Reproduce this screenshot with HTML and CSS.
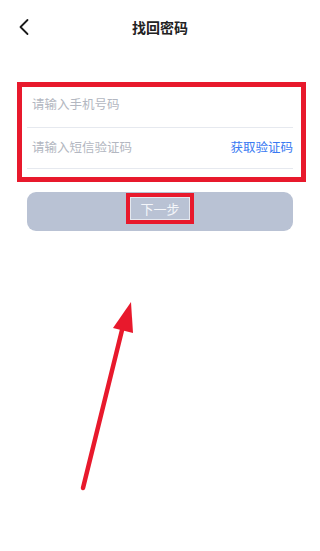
FILE: index.html
```html
<!DOCTYPE html>
<html lang="zh-CN">
<head>
<meta charset="utf-8">
<link rel="stylesheet" href="styles.css">
</head>
<body>
<div class="page">
  <header class="nav">
    <span class="back">
      <svg width="14" height="18" viewBox="0 0 14 18"><path d="M9.5 2 L2.5 9 L9.5 16" fill="none" stroke="#1a1a1a" stroke-width="1.8" stroke-linecap="round" stroke-linejoin="round"/></svg>
    </span>
    <h1 class="title">找回密码</h1>
    <span></span>
  </header>
  <form class="form">
    <div class="row row-first">
      <span class="placeholder">请输入手机号码</span>
    </div>
    <div class="row row-second">
      <span class="placeholder">请输入短信验证码</span>
      <span class="code">获取验证码</span>
    </div>
  </form>
  <div class="btn">
    <span class="btn-label">下一步</span>
  </div>
  <svg class="arrow" width="320" height="551" viewBox="0 0 320 551">
    <line x1="83" y1="488" x2="124" y2="322" stroke="#e8192c" stroke-width="4.5" stroke-linecap="round"/>
    <polygon points="131,302 113,328 133,333" fill="#e8192c"/>
  </svg>
</div>
</body>
</html>
```
FILE: styles.css
```css
html, body {
  margin: 0;
  padding: 0;
  background: #fff;
}
body {
  font-family: "Noto Sans CJK SC", "Noto Sans", sans-serif;
}
.page {
  position: relative;
  width: 320px;
  height: 551px;
  overflow: hidden;
}
.nav {
  display: grid;
  grid-template-columns: 1fr auto 1fr;
  align-items: center;
  height: 54px;
}
.back {
  display: flex;
  align-items: center;
  padding-left: 18px;
  height: 18px;
}
.title {
  margin: 0;
  font-size: 14px;
  font-weight: 700;
  color: #222;
  line-height: 18px;
}
.form {
  margin: 28px 0 0 17px;
  width: 289px;
  box-sizing: border-box;
  border: 5px solid #e8192c;
  padding: 0 8px 8px 5px;
}
.row {
  display: flex;
  justify-content: space-between;
  align-items: center;
  line-height: 16px;
  font-size: 12.5px;
  border-bottom: 1px solid #e6e9ef;
}
.row-first {
  padding: 9px 0 15px;
}
.row-second {
  padding: 11px 0 13px;
}
.placeholder {
  color: #b3b7c1;
  padding-left: 5px;
}
.code {
  color: #3a7af2;
}
.btn {
  margin: 10px 0 0 27px;
  width: 266px;
  height: 39px;
  border-radius: 9px;
  background: #b9c2d4;
  display: flex;
  justify-content: center;
  align-items: flex-start;
  padding-top: 1px;
  box-sizing: border-box;
}
.btn-label {
  border: 4px solid #e8192c;
  outline: 1px solid #e4e8ef;
  outline-offset: -5px;
  padding: 3px 10px;
  font-size: 13px;
  line-height: 17px;
  color: #f4f6fa;
}
.arrow {
  position: absolute;
  left: 0;
  top: 0;
  pointer-events: none;
}
```
